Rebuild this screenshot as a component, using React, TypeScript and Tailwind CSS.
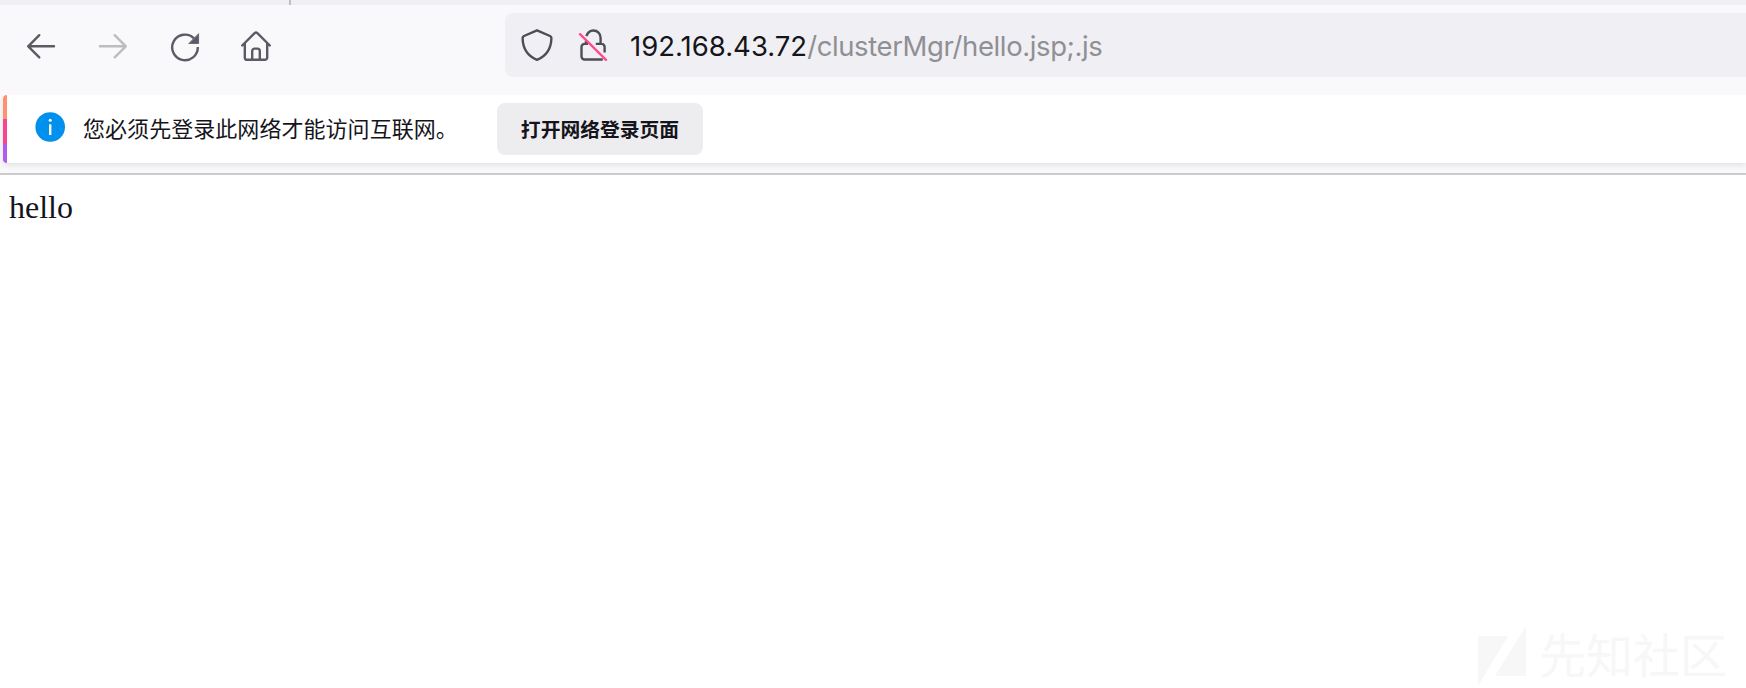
import type { ReactNode } from 'react';

function Icon({ className, children }: { className: string; children: ReactNode }) {
  return (
    <svg
      viewBox="0 0 32 32"
      fill="none"
      stroke="currentColor"
      strokeWidth="2.4"
      strokeLinecap="round"
      strokeLinejoin="round"
      className={`size-8 shrink-0 ${className}`}
    >
      {children}
    </svg>
  );
}

function Toolbar() {
  return (
    <div className="flex h-[90px] items-start bg-[#f9f9fb] pt-2">
      <nav className="flex h-16 w-[505px] shrink-0 items-center pl-[25px] pt-[2px] text-[#5b5b66]">
        <Icon className="">
          <path d="M29 16.3H3.2M14.3 5.2L3.2 16.3l11.1 11.1" />
        </Icon>
        <Icon className="ml-10 text-[#bcbcc1]">
          <path d="M3 16.3h25.8M17.7 5.2l11.1 11.1-11.1 11.1" />
        </Icon>
        <Icon className="ml-10">
          <path d="M28.8 17A12.8 12.8 0 1 1 25 8.3" strokeLinecap="butt" />
          <path d="M29.6 4v9.500h-9.500z" fill="currentColor" strokeWidth="0.8" />
        </Icon>
        <Icon className="ml-[39px]">
          <path d="M2.2 15.500L14.600 3.100a2 2 0 0 1 2.800 0L29.800 15.500M4.800 13.300v14.100a2.400 2.400 0 0 0 2.400 2.400h17.600a2.400 2.400 0 0 0 2.400-2.400V13.300M12.200 29.500V21a2.400 2.400 0 0 1 2.400-2.400h2.800a2.400 2.400 0 0 1 2.400 2.400v8.500" />
        </Icon>
      </nav>
      <div className="flex h-16 flex-1 items-center rounded-l-lg bg-[#f0f0f4] pl-4">
        <Icon className="text-[#4d4d57]">
          <path d="M16 1.3L29 7c1 .5 1.4 1.2 1.4 2.2-.2 9.5-4.400 17.500-14.400 21.700C6 26.700 1.800 18.700 1.600 9.200c0-1 .4-1.700 1.400-2.200z" />
        </Icon>
        <Icon className="ml-6 text-[#4d4d57]">
          <path d="M9.400 7.200C10.500 3.900 12.900 1.500 16.300 1.500c4.300 0 7.300 3.200 7.300 7.300v6M18.800 14.900h5.800a3 3 0 0 1 3 3v5.500M25.800 30.500H7.500a3 3 0 0 1-3-3V17.900a3 3 0 0 1 3-3h3.500M9 15V12" strokeLinecap="butt" />
          <path d="M3 5.200l26 25.600" stroke="#ff4b8b" />
        </Icon>
        <span className="ml-[21px] mt-[2px] whitespace-nowrap font-['Inter',sans-serif] text-[27.5px] leading-8 text-[#15141a]">
          <span>192.168.43.72</span>
          <span className="tracking-[-0.39px] text-[#8f8f94]">/clusterMgr/hello.jsp;.js</span>
        </span>
      </div>
    </div>
  );
}

function Notification() {
  return (
    <div className="h-[78px] overflow-hidden bg-[#f9f9fb] pl-[3px]">
      <div className="flex h-[68px] items-center rounded-l bg-white shadow-[0_2px_6px_rgba(0,0,0,0.10)]">
        <div className="flex h-[68px] w-1 shrink-0 flex-col overflow-hidden rounded-l">
          <div className="h-6 bg-[#ff9070]" />
          <div className="h-[25px] bg-[#f5478f]" />
          <div className="flex-1 bg-[#ae5bef]" />
        </div>
        <svg viewBox="0 0 30 30" className="mb-1 ml-7 size-[30px] shrink-0">
          <circle cx="15.200" cy="15" r="14.800" fill="#0090ed" />
          <circle cx="15.200" cy="8.300" r="1.500" fill="#fff" />
          <path d="M15.200 12.300v10.700" stroke="#fff" strokeWidth="2.400" />
        </svg>
        <span className="ml-[18px] w-[374px] whitespace-nowrap pb-[5px] font-['Noto_Sans_CJK_SC',sans-serif] text-[22px] leading-8 tracking-[0.05px] text-[#15141a]">
          您必须先登录此网络才能访问互联网。
        </span>
        <button className="ml-10 flex h-[52px] w-[206px] shrink-0 items-center justify-center whitespace-nowrap rounded-lg bg-[#ededf0] pb-px font-['Noto_Sans_CJK_SC',sans-serif] text-[19.800px] font-bold leading-8 text-[#15141a]">
          打开网络登录页面
        </button>
      </div>
    </div>
  );
}

export default function App() {
  return (
    <div className="flex h-[688px] w-[1746px] flex-col overflow-hidden bg-white">
      <div className="h-[5px] shrink-0 bg-[#f0f0f4] pl-[289px]">
        <div className="h-full w-[2px] bg-[#bdbdc6]" />
      </div>
      <Toolbar />
      <Notification />
      <main className="flex flex-1 flex-col justify-between border-t-2 border-[#cccccc]">
        <p className="pl-[9px] pt-[14px] font-['Liberation_Serif',serif] text-[32px] leading-[37px] text-[#15141a]">hello</p>
        <div className="flex items-center self-end pb-[2px] pr-[19px] text-[#f7f7f7]">
          <svg viewBox="0 0 48 60" className="mt-[2px] h-[60px] w-12" fill="currentColor">
            <path d="M0 10h30L0 60zM48 0v50H17z" />
          </svg>
          <span className="ml-[13px] whitespace-nowrap pb-[3px] font-['Noto_Sans_CJK_SC',sans-serif] text-[47px] leading-[60px]">先知社区</span>
        </div>
      </main>
    </div>
  );
}
